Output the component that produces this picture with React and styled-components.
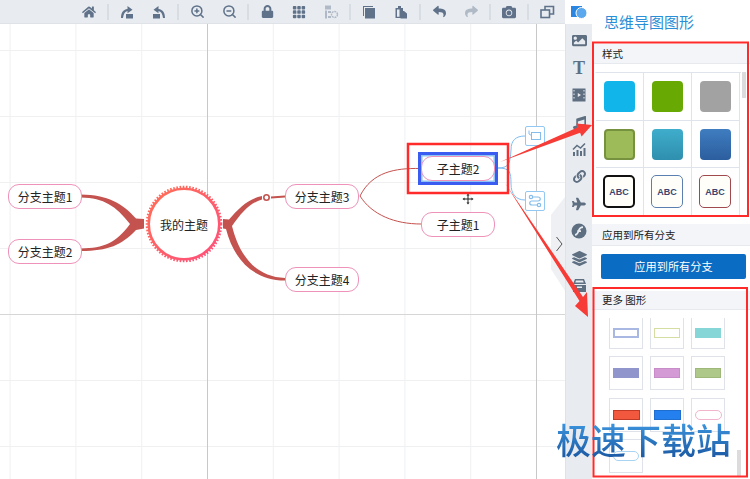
import { Fragment } from "react";
import styled, { createGlobalStyle } from "styled-components";
import {
  FaHome,
  FaLock,
  FaCamera,
  FaReply,
  FaShare,
  FaImage,
  FaMusic,
  FaLink,
  FaPlane,
  FaLayerGroup,
} from "react-icons/fa";
import { BsGrid3X3GapFill } from "react-icons/bs";
import { ZoomIn, ZoomOut } from "lucide-react";

const GlobalStyle = createGlobalStyle`
  html, body {
    margin: 0;
    padding: 0;
    background: #ffffff;
  }
  body {
    font-family: "Noto Sans CJK SC", "Noto Sans", sans-serif;
    color: #222222;
  }
`;

const Page = styled.div`
  position: relative;
  display: flex;
  width: 750px;
  height: 479px;
  overflow: hidden;
`;
const Main = styled.div`
  display: flex;
  flex-direction: column;
  width: 565px;
  flex: none;
`;
const Toolbar = styled.div`
  display: flex;
  align-items: center;
  height: 23px;
  padding-left: 73px;
  background: #e8ecf1;
  border-bottom: 1px solid #dfe3e8;
  color: #5f7289;
`;
const Tool = styled.div`
  display: flex;
  align-items: center;
  justify-content: center;
  width: 32px;
  height: 23px;
  flex: none;
  opacity: ${(p) => (p.$faded ? 0.4 : 1)};
`;
const Sep = styled.div`
  width: 1.5px;
  height: 16px;
  margin: 0 2.25px;
  flex: none;
  background: #d8dde3;
`;
const Canvas = styled.div`
  position: relative;
  flex: 1;
  overflow: hidden;
  background-color: #ffffff;
  background-image: linear-gradient(to right, #c8c8c8 1.5px, transparent 1.5px),
    linear-gradient(to bottom, #d6d6d6 1px, transparent 1px),
    linear-gradient(to right, #eff0f2 1px, transparent 1px),
    linear-gradient(to bottom, #eff0f2 1px, transparent 1px);
  background-size: 329px 100%, 100% 330px, 65.8px 100%, 100% 66px;
  background-position: 207px 0, 0 290px, 9.6px 0, 0 26px;
`;
const MapLines = styled.svg`
  position: absolute;
  inset: 0;
  width: 565px;
  height: 455px;
`;
const Node = styled.div`
  position: absolute;
  left: ${(p) => p.$x}px;
  top: ${(p) => p.$y - 24}px;
  box-sizing: border-box;
  display: flex;
  align-items: center;
  justify-content: center;
  width: 74px;
  height: 24.5px;
  border: 1.3px solid #ee92ba;
  border-radius: 11px;
  background: #ffffff;
  font-size: 12px;
  color: #222222;
`;
const CenterNode = styled.div`
  position: absolute;
  left: 146px;
  top: 161px;
  width: 76px;
  height: 78px;
  display: flex;
  align-items: center;
  justify-content: center;
  font-size: 12px;
  color: #222222;
`;
const Selection = styled.div`
  position: absolute;
  left: 418px;
  top: 128px;
  box-sizing: border-box;
  width: 80px;
  height: 33px;
  border: 3px solid #3a5cf0;
  box-shadow: inset 0 0 0 1.5px #8fc4f5;
`;
const FloatButton = styled.div`
  position: absolute;
  left: 525px;
  top: ${(p) => p.$y - 24}px;
  box-sizing: border-box;
  display: flex;
  align-items: center;
  justify-content: center;
  width: 20px;
  height: 20px;
  border: 1px solid #92c8f2;
  border-radius: 2px;
  background: #ffffff;
`;
const MoveCursor = styled.svg`
  position: absolute;
  left: 462px;
  top: 169px;
  width: 12px;
  height: 12px;
`;
const CollapseTab = styled.svg`
  position: absolute;
  left: 550px;
  top: 173px;
  width: 15px;
  height: 96px;
`;
const Rail = styled.div`
  width: 27px;
  flex: none;
  display: flex;
  flex-direction: column;
  align-items: center;
  color: #5f6f82;
`;
const RailTop = styled.div`
  display: flex;
  align-items: center;
  justify-content: center;
  width: 100%;
  height: 24px;
  background: #ffffff;
`;
const RailBody = styled.div`
  flex: 1;
  width: 100%;
  padding-top: 3px;
  background: #e8ecf1;
  border-left: 1px solid #dfe3e8;
  box-sizing: border-box;
`;
const RailItem = styled.div`
  display: flex;
  align-items: center;
  justify-content: center;
  height: 27.2px;
`;
const SerifT = styled.span`
  font-family: "Liberation Serif", serif;
  font-size: 18px;
  font-weight: 700;
  line-height: 1;
`;
const Panel = styled.div`
  position: relative;
  flex: 1;
  display: flex;
  flex-direction: column;
  background: #ffffff;
  overflow: hidden;
`;
const PanelTitle = styled.div`
  height: 44px;
  padding: 11px 0 0 12px;
  box-sizing: border-box;
  font-size: 15px;
  line-height: 22px;
  color: #2a8fd6;
`;
const SectionHead = styled.div`
  display: flex;
  align-items: center;
  height: ${(p) => p.$h}px;
  padding-left: 10px;
  flex: none;
  background: #f3f5f8;
  border-bottom: 1px solid #e6e9ee;
  box-sizing: border-box;
  font-size: 10.5px;
  color: #222222;
`;
const StyleGrid = styled.div`
  display: grid;
  grid-template-columns: repeat(3, 48px);
  grid-auto-rows: 47.7px;
  width: 146px;
  margin: 8px 0 7.5px 2.5px;
  border-top: 1.5px solid #dfe4ec;
  border-left: 1.5px solid transparent;
  box-sizing: border-box;
`;
const StyleCell = styled.div`
  display: flex;
  align-items: center;
  justify-content: center;
  border-right: 1.5px solid #dfe4ec;
  border-bottom: 1.5px solid #dfe4ec;
`;
const Swatch = styled.div`
  width: 31px;
  height: 31px;
  box-sizing: border-box;
  border-radius: 4px;
  background: ${(p) => p.$bg};
  border: ${(p) => (p.$line ? `2px solid ${p.$line}` : "none")};
`;
const AbcSwatch = styled.div`
  width: 32px;
  height: 33px;
  box-sizing: border-box;
  display: flex;
  align-items: center;
  justify-content: center;
  border-radius: 5px;
  background: #fffef9;
  border: ${(p) => p.$w}px solid ${(p) => p.$line};
  font-family: "Liberation Sans", sans-serif;
  font-size: 9px;
  font-weight: 700;
  color: #3a4570;
`;
const ApplyButton = styled.div`
  display: flex;
  align-items: center;
  justify-content: center;
  height: 25px;
  margin: 8px 4px 12px 9px;
  flex: none;
  border-radius: 2px;
  background: #0a6cc2;
  font-size: 11.2px;
  color: #ffffff;
`;
const ShapeGrid = styled.div`
  display: grid;
  grid-template-columns: repeat(3, 34px);
  grid-template-rows: 31px repeat(3, 34px);
  column-gap: 7px;
  row-gap: 7.5px;
  margin: 8px 0 0 17px;
`;
const ShapeCell = styled.div`
  display: flex;
  align-items: center;
  justify-content: center;
  box-sizing: border-box;
  border: 1px solid #dfe3e9;
  border-top: ${(p) => (p.$clipped ? "none" : "1px solid #dfe3e9")};
`;
const Shape = styled.div`
  width: ${(p) => p.$w || 26}px;
  height: 10px;
  box-sizing: border-box;
  background: ${(p) => p.$bg};
  border: ${(p) => p.$bw || 1}px solid ${(p) => p.$line};
  border-radius: ${(p) => p.$r || 0}px;
`;
const ScrollThumb = styled.div`
  position: absolute;
  left: ${(p) => p.$x}px;
  top: ${(p) => p.$y}px;
  width: 4px;
  height: ${(p) => p.$h}px;
  background: #dcdcdc;
`;
const Annotations = styled.svg`
  position: absolute;
  inset: 0;
  width: 750px;
  height: 479px;
  pointer-events: none;
`;
const Watermark = styled.div`
  position: absolute;
  left: 556px;
  top: 414px;
  font-size: 35px;
  line-height: 50px;
  font-weight: 500;
  white-space: nowrap;
  background: linear-gradient(to bottom, #3d97e0 15%, #1d5ca6 85%);
  -webkit-background-clip: text;
  background-clip: text;
  color: transparent;
`;

const RaiseIcon = ({ flip }) => (
  <svg width="14" height="14" viewBox="0 0 14 14" fill="currentColor">
    <g transform={flip ? "matrix(-1 0 0 1 14 0)" : undefined}>
      <rect x="6" y="9" width="7" height="4.5" />
      <path d="M1 13 C1 8 3 4.5 7.5 4 V1 L12.5 4.8 L7.5 8.2 V6 C5 6.3 3.5 9 3 13 Z" />
    </g>
  </svg>
);

const ListGearIcon = () => (
  <svg width="15" height="14" viewBox="0 0 15 14" fill="currentColor">
    <rect x="1" y="0.5" width="6" height="4" />
    <rect x="1" y="5.5" width="2" height="8" />
    <rect x="4" y="6" width="3" height="2" />
    <rect x="4" y="11" width="3" height="2" />
    <circle cx="10.5" cy="9.5" r="3" fill="none" stroke="currentColor" strokeWidth="1.4" strokeDasharray="2 0.7" />
  </svg>
);

const CopyIcon = () => (
  <svg width="14" height="14" viewBox="0 0 14 14" fill="currentColor">
    <path d="M1 1 H11 V2 H2 V11 H1 Z" />
    <rect x="3" y="3" width="10" height="10.5" />
  </svg>
);

const PasteIcon = () => (
  <svg width="14" height="14" viewBox="0 0 14 14">
    <path d="M1.5 3 H4 V1 H7 V3 H9 V13 H1.5 Z M3 4.5 V11.8 H5.5 V4.5 Z" fill="currentColor" />
    <path d="M6.5 6 H10 L13 8.5 V13.5 H6.5 Z" fill="currentColor" />
  </svg>
);

const WindowsIcon = () => (
  <svg width="15" height="14" viewBox="0 0 15 14" fill="none" stroke="currentColor" strokeWidth="1.6">
    <rect x="1" y="5" width="8.5" height="7.5" />
    <path d="M5 5 V1.5 H13.5 V9 H9.5" />
  </svg>
);

const ShapesIcon = () => (
  <svg width="16" height="14" viewBox="0 0 16 14">
    <rect x="0" y="1" width="11" height="11" fill="#2a86e0" />
    <circle cx="10.5" cy="8" r="5.5" fill="#5ba8ee" stroke="#ffffff" strokeWidth="1" />
  </svg>
);

const VideoIcon = () => (
  <svg width="14" height="14" viewBox="0 0 14 14">
    <rect x="0.5" y="0.5" width="13" height="13" fill="currentColor" />
    <path d="M2 2 V3.5 M2 5.5 V7 M2 9 V10.5 M12 2 V3.5 M12 5.5 V7 M12 9 V10.5" stroke="#e8ecf1" strokeWidth="1" />
    <path d="M5.8 5 L9 7 L5.8 9 Z" fill="#e8ecf1" />
  </svg>
);

const ChartIcon = () => (
  <svg width="15" height="14" viewBox="0 0 15 14" fill="currentColor">
    <rect x="1" y="10" width="2" height="4" />
    <rect x="4.5" y="8" width="2" height="6" />
    <rect x="8" y="9" width="2" height="5" />
    <rect x="11.5" y="6" width="2" height="8" />
    <path d="M1 7.5 L5 3.5 L8.5 6 L13 1.5" fill="none" stroke="currentColor" strokeWidth="1.5" />
  </svg>
);

const FlashIcon = () => (
  <svg width="16" height="16" viewBox="0 0 16 16">
    <circle cx="8" cy="8" r="7.5" fill="currentColor" />
    <path d="M4 12 C7 11.5 7 9 8 7 C8.7 5.2 9.8 4.3 12 4.2 M6.2 8.2 H10" fill="none" stroke="#e8ecf1" strokeWidth="1.7" />
  </svg>
);

const TrayIcon = () => (
  <svg width="15" height="15" viewBox="0 0 15 15" fill="currentColor">
    <path d="M3 1 H12 L14 6 H1 Z M4 2.5 L3.3 4.5 H11.7 L11 2.5 Z" fillRule="evenodd" />
    <path d="M1 7 H14 V14 H1 Z M5 8.5 V10 H10 V8.5 Z" fillRule="evenodd" />
  </svg>
);

const CardIcon = () => (
  <svg width="14" height="14" viewBox="0 0 14 14" fill="none" stroke="#86bdea" strokeWidth="1">
    <rect x="3.5" y="3.5" width="9" height="7" />
    <path d="M1 1.5 V5 L3.5 6.5" />
  </svg>
);

const FlowIcon = () => (
  <svg width="14" height="14" viewBox="0 0 14 14" fill="none" stroke="#86bdea" strokeWidth="1.2">
    <circle cx="3" cy="3" r="1.7" />
    <circle cx="11" cy="11" r="1.7" />
    <path d="M5 3 H10 C13 3 13 7 10 7 H4 C1 7 1 11 4 11 H9" />
  </svg>
);

const toolbarGroups = [
  [{ icon: <FaHome size={14} /> }],
  [{ icon: <RaiseIcon /> }, { icon: <RaiseIcon flip /> }],
  [
    { icon: <ZoomIn size={15} strokeWidth={2.4} /> },
    { icon: <ZoomOut size={15} strokeWidth={2.4} /> },
  ],
  [
    { icon: <FaLock size={13} /> },
    { icon: <BsGrid3X3GapFill size={14} /> },
    { icon: <ListGearIcon />, faded: true },
  ],
  [{ icon: <CopyIcon /> }, { icon: <PasteIcon /> }],
  [
    { icon: <FaReply size={13} /> },
    { icon: <FaShare size={13} />, faded: true },
  ],
  [{ icon: <FaCamera size={14} /> }],
  [{ icon: <WindowsIcon /> }],
];

const railIcons = [
  <FaImage size={15} />,
  <SerifT>T</SerifT>,
  <VideoIcon />,
  <FaMusic size={13} />,
  <ChartIcon />,
  <FaLink size={13} />,
  <FaPlane size={14} />,
  <FlashIcon />,
  <FaLayerGroup size={15} />,
  <TrayIcon />,
];

const branches = [
  { label: "分支主题1", x: 8, y: 184 },
  { label: "分支主题2", x: 8, y: 239 },
  { label: "分支主题3", x: 285, y: 184 },
  { label: "分支主题4", x: 285, y: 267 },
  { label: "子主题2", x: 421, y: 156 },
  { label: "子主题1", x: 421, y: 212 },
];

const plainSwatches = [
  { bg: "#12b5ea" },
  { bg: "#68a904" },
  { bg: "#a2a2a2" },
  { bg: "#9dbb58", line: "#77923f" },
  { bg: "linear-gradient(to bottom, #3fadcc, #2f8fae)" },
  { bg: "linear-gradient(to bottom, #3f7dc0, #2c5e9e)" },
];

const abcSwatches = [
  { line: "#111111", w: 2 },
  { line: "#5b7fb0", w: 1.5 },
  { line: "#a04a50", w: 1.5 },
];

const moreShapes = [
  { bg: "#ffffff", line: "#a8b8e2", bw: 2 },
  { bg: "#ffffff", line: "#d5dda2" },
  { bg: "#86d6d8", line: "#86d6d8" },
  { bg: "#9095cc", line: "#9095cc" },
  { bg: "#d49ad6", line: "#c98ccb" },
  { bg: "#adc888", line: "#9db878" },
  { bg: "#f2583e", line: "#c03a25", w: 27 },
  { bg: "#2480ee", line: "#1f6fd0", w: 27 },
  { bg: "#ffffff", line: "#f2b4cc", w: 27, r: 5 },
  { bg: "#ffffff", line: "#a8d4f2", r: 5 },
];

const App = () => (
  <Page>
    <GlobalStyle />
    <Main>
      <Toolbar>
        {toolbarGroups.map((group, i) => (
          <Fragment key={i}>
            {i > 0 && <Sep />}
            {group.map((tool, j) => (
              <Tool key={j} $faded={tool.faded}>
                {tool.icon}
              </Tool>
            ))}
          </Fragment>
        ))}
      </Toolbar>
      <Canvas>
        <MapLines viewBox="0 24 565 455">
          <defs>
            <linearGradient id="ring" x1="0" y1="0" x2="1" y2="1">
              <stop offset="0" stopColor="#ff6f55" />
              <stop offset="1" stopColor="#ff4f7c" />
            </linearGradient>
          </defs>
          <g fill="#c4524e">
            <path d="M81 194.5 C108 195 122 203 136 218.5 L144 219 V228.5 L136 230 C122 245 108 251 81 251 V248.5 C104 248 116 243 130 224 C116 206 104 198 81 197.5 Z" />
            <path d="M223 219 L229 219.5 C239 208 248 199 262 196 V199.5 C250 203 242 212 232 226 C238 250 252 277 285 278 V280.5 C250 280 233 256 226 229 L223 228.5 Z" />
            <path d="M271 196.5 L285 195.5 V197.5 L271 198.5 Z" />
          </g>
          <circle cx="266.5" cy="197.5" r="2.7" fill="#ffffff" stroke="#c4524e" strokeWidth="1.6" />
          <path
            d="M420 168.5 C395 168 372 172 360 196 C372 215 395 224 421 224"
            fill="none"
            stroke="#c4524e"
            strokeWidth="1"
          />
          <path
            d="M498 168 C510 168 510 162 511 150 C511 140 516 136 525 136 M498 168 C510 168 511 172 511 184 C511 194 516 200 525 200"
            fill="none"
            stroke="#7fbdf0"
            strokeWidth="1"
          />
          <circle cx="184" cy="224" r="37" fill="none" stroke="url(#ring)" strokeWidth="2.6" strokeDasharray="1.6 1.6" />
          <circle cx="184" cy="224" r="35.3" fill="#ffffff" stroke="url(#ring)" strokeWidth="2.6" />
        </MapLines>
        <CenterNode>我的主题</CenterNode>
        <Selection />
        {branches.map((node) => (
          <Node key={node.label} $x={node.x} $y={node.y}>
            {node.label}
          </Node>
        ))}
        <FloatButton $y={126}>
          <CardIcon />
        </FloatButton>
        <FloatButton $y={191}>
          <FlowIcon />
        </FloatButton>
        <MoveCursor viewBox="0 0 12 12">
          <path
            d="M6 0.5 L7.5 2.5 H6.5 V5.5 H9.5 V4.5 L11.5 6 L9.5 7.5 V6.5 H6.5 V9.5 H7.5 L6 11.5 L4.5 9.5 H5.5 V6.5 H2.5 V7.5 L0.5 6 L2.5 4.5 V5.5 H5.5 V2.5 H4.5 Z"
            fill="#222222"
          />
        </MoveCursor>
        <CollapseTab viewBox="0 0 15 96">
          <path d="M15 0 L1 18 V72 L15 94 Z" fill="#eef0f3" />
          <path d="M6.5 40 L12 47 L6.5 54" fill="none" stroke="#555555" strokeWidth="1" />
        </CollapseTab>
      </Canvas>
    </Main>
    <Rail>
      <RailTop>
        <ShapesIcon />
      </RailTop>
      <RailBody>
        {railIcons.map((icon, i) => (
          <RailItem key={i}>{icon}</RailItem>
        ))}
      </RailBody>
    </Rail>
    <Panel>
      <PanelTitle>思维导图图形</PanelTitle>
      <SectionHead $h={20}>样式</SectionHead>
      <StyleGrid>
        {plainSwatches.map((s, i) => (
          <StyleCell key={i}>
            <Swatch $bg={s.bg} $line={s.line} />
          </StyleCell>
        ))}
        {abcSwatches.map((s, i) => (
          <StyleCell key={i}>
            <AbcSwatch $line={s.line} $w={s.w}>
              ABC
            </AbcSwatch>
          </StyleCell>
        ))}
      </StyleGrid>
      <SectionHead $h={22}>应用到所有分支</SectionHead>
      <ApplyButton>应用到所有分支</ApplyButton>
      <SectionHead $h={19}>更多 图形</SectionHead>
      <ShapeGrid>
        {moreShapes.map((s, i) => (
          <ShapeCell key={i} $clipped={i < 3}>
            <Shape $bg={s.bg} $line={s.line} $bw={s.bw} $w={s.w} $r={s.r} />
          </ShapeCell>
        ))}
      </ShapeGrid>
      <ScrollThumb $x={150} $y={72} $h={26} />
      <ScrollThumb $x={145} $y={450} $h={27} />
    </Panel>
    <Annotations viewBox="0 0 750 479">
      <g fill="none" stroke="#ff2b2b" strokeWidth="2">
        <rect x="408" y="144" width="100" height="49" strokeWidth="2.5" />
        <rect x="593" y="42.5" width="155" height="173.5" />
        <rect x="593.5" y="288" width="153.5" height="188.5" />
      </g>
      <g fill="#f73b36">
        <polygon points="500,162 577.9,127.2 576.4,123.5 592,125 581.6,136.5 580.1,132.8" />
        <polygon points="505,183 583,297 587,292 588,317 575,306 579.5,301" />
      </g>
    </Annotations>
    <Watermark>极速下载站</Watermark>
  </Page>
);

export default App;
